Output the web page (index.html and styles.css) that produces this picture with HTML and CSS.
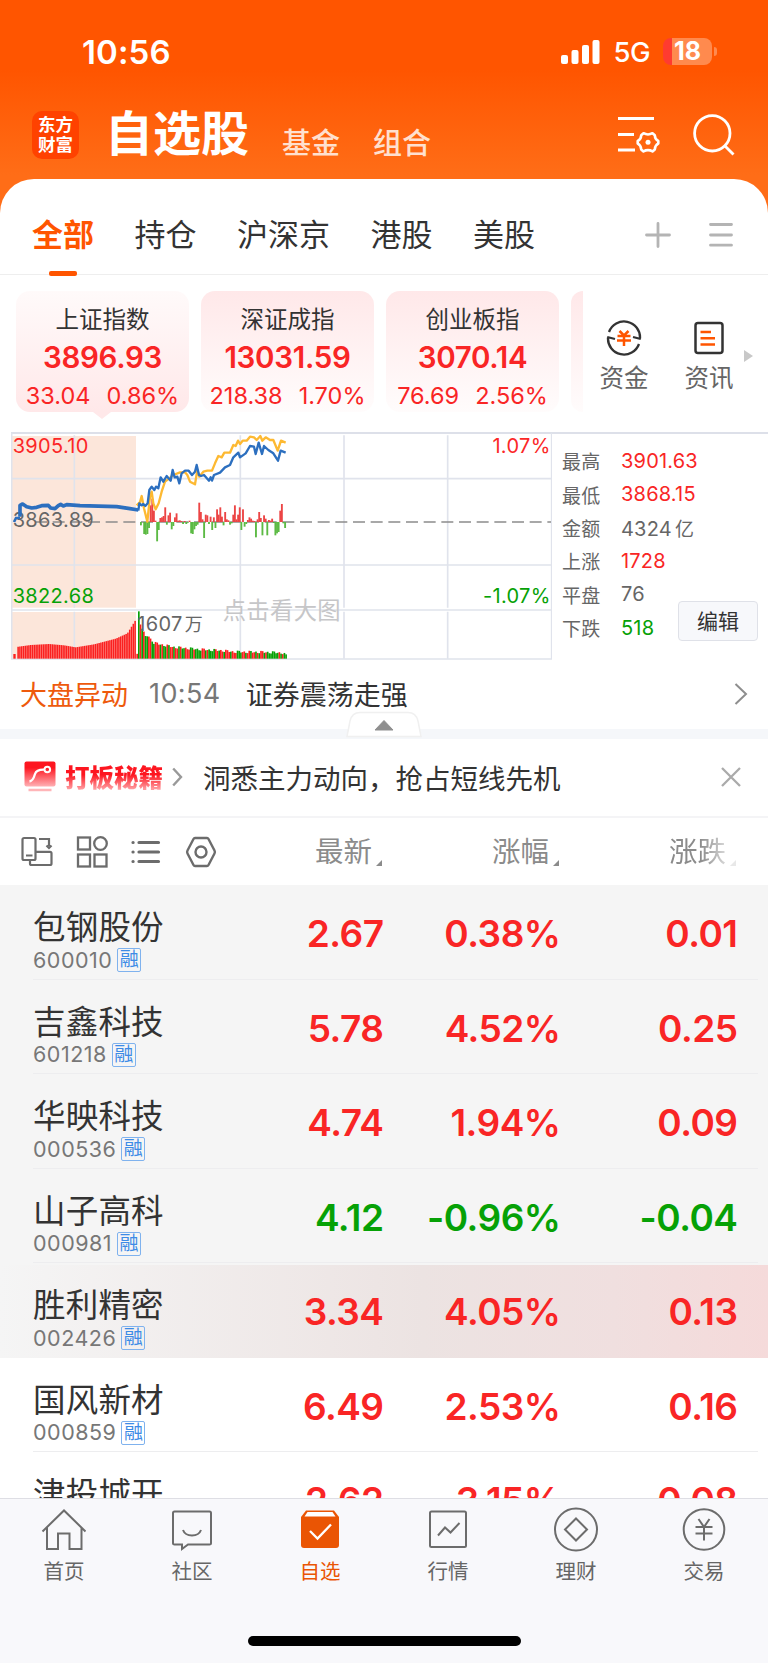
FILE: index.html
```html
<!DOCTYPE html>
<html lang="zh-CN">
<head>
    <meta charset="UTF-8">
    <meta name="viewport" content="width=device-width, initial-scale=1.0">
    <title>自选股</title>
    <link rel="stylesheet" href="styles.css">
</head>
<body>
<div class="app">

    <div class="header">
        <div class="status-bar">
            <span class="time">10:56</span>
            <div class="status-right">
                <svg class="signal" width="39" height="24" viewBox="0 0 39 24" fill="#fff">
                    <rect x="0" y="15" width="7" height="9" rx="2"/>
                    <rect x="10.5" y="10" width="7" height="14" rx="2"/>
                    <rect x="21" y="5" width="7" height="19" rx="2"/>
                    <rect x="31.5" y="0" width="7" height="24" rx="2"/>
                </svg>
                <span class="network">5G</span>
                <div class="battery"><span>18</span></div>
                <i class="battery-tip"></i>
            </div>
        </div>
        <div class="nav">
            <div class="logo"><span>东方</span><span>财富</span></div>
            <div class="nav-tabs">
                <h1>自选股</h1>
                <span>基金</span>
                <span>组合</span>
            </div>
            <div class="nav-icons">
                <svg width="43" height="40" viewBox="0 0 43 40" fill="none" stroke="#fff" stroke-width="3">
                    <path d="M1 3.500H37M1 19.500H17M1 35H18"/>
                    <path stroke-width="2.600" stroke-linejoin="round" d="M26.500 18.200Q31 20.700 35.500 18.200L37.800 20.200Q38 24.500 41.300 26L41.300 28.600Q38 30.100 37.800 34.400L35.500 36.400Q31 33.900 26.500 36.400L24.200 34.400Q24 30.100 20.700 28.600L20.700 26Q24 24.500 24.200 20.200Z"/>
                    <circle cx="31" cy="27.300" r="2.500" fill="#fff" stroke="none"/>
                </svg>
                <svg width="42" height="42" viewBox="0 0 42 42" fill="none" stroke="#fff" stroke-width="2.800">
                    <circle cx="19.300" cy="19.300" r="17.700"/>
                    <path d="M31.500 31.500L40.500 40.500"/>
                </svg>
            </div>
        </div>
    </div>

    <div class="sheet">
        <div class="group-tabs">
            <div class="group-list">
                <span class="active">全部</span>
                <span>持仓</span>
                <span>沪深京</span>
                <span>港股</span>
                <span>美股</span>
            </div>
            <svg width="26" height="26" viewBox="0 0 26 26" stroke="#b4b4b4" stroke-width="2.800" stroke-linecap="round">
                <path d="M1.500 13H24.500M13 1.500V24.500"/>
            </svg>
            <svg class="menu-icon" width="24" height="26" viewBox="0 0 24 26" stroke="#b4b4b4" stroke-width="2.800" stroke-linecap="round">
                <path d="M1.500 2.500H22.500M1.500 13H22.500M1.500 23.200H22.500"/>
            </svg>
        </div>

        <div class="indices">
            <div class="card selected">
                <h3>上证指数</h3>
                <strong>3896.93</strong>
                <p><span>33.04</span><span>0.86%</span></p>
            </div>
            <div class="card">
                <h3>深证成指</h3>
                <strong>13031.59</strong>
                <p><span>218.38</span><span>1.70%</span></p>
            </div>
            <div class="card">
                <h3>创业板指</h3>
                <strong>3070.14</strong>
                <p><span>76.69</span><span>2.56%</span></p>
            </div>
            <div class="card-peek"></div>
            <div class="shortcut">
                <svg width="36" height="36" viewBox="0 0 36 36" fill="none" stroke="#333" stroke-width="2.300">
                    <path d="M3 12A16 16 0 0 1 34 18.500M34.800 19L27 17M33 24A16 16 0 0 1 2 17.500M1.200 17L9 19"/>
                    <path stroke="#f50" stroke-width="2.500" d="M13.500 11L18 15.500L22.500 11M11.500 16H24.500M11 20.500H25M18 15.500V26"/>
                </svg>
                <span>资金</span>
            </div>
            <div class="shortcut">
                <svg width="30" height="36" viewBox="0 0 30 36" fill="none" stroke="#333" stroke-width="2.500">
                    <rect x="1.500" y="3" width="27" height="30" rx="2.500"/>
                    <path stroke="#f50" d="M6.500 12H17M6.500 18.300H21M6.500 24.500H21"/>
                </svg>
                <span>资讯</span>
            </div>
            <i class="more-arrow"></i>
        </div>

        <div class="market">
            <!-- chart units are 1/3 px -->
            <svg class="chart" width="541" height="228" viewBox="33 36 1623 684">
                <rect x="36" y="48" width="372" height="515" fill="#fce6da"/>
                <rect x="36" y="576" width="372" height="140" fill="#fce6da"/>
                <g stroke="#e0e3ec" stroke-width="5">
                    <path d="M36 176H1653M36 435H1653M36 570H1653" />
                    <path d="M223 46V563M223 575V716M721 46V563M721 575V716M1032 46V563M1032 575V716M1343 46V563M1343 575V716"/>
                    <path fill="none" d="M35 38V717H1655V38"/>
                </g>
                <path d="M105 306H1653" stroke="#8c8c8c" stroke-width="5" stroke-dasharray="36 17" />
                <g id="diff"></g>
                <g id="volume"></g>
                <text x="38" y="100" fill="#fb2727">3905.10</text>
                <text x="38" y="322" fill="#666">3863.89</text>
                <text x="38" y="549" fill="#06a106">3822.68</text>
                <text x="1652" y="100" fill="#fb2727" text-anchor="end">1.07%</text>
                <text x="1652" y="549" fill="#06a106" text-anchor="end">-1.07%</text>
                <text x="412" y="634" fill="#666">1607</text>
                <text x="554" y="632" fill="#666" class="unit">万</text>
                <text x="668" y="598" fill="#c6c6c8" class="watermark">点击看大图</text>
                <polyline fill="none" stroke="#fdb932" stroke-width="7" stroke-linejoin="round" points="410,256 420,246 425,228 432,265 442,305 450,230 455,215 460,250 467,268 476,250 485,215 495,185 508,175 520,165 540,157 555,157 562,165 570,185 585,193 592,150 598,170 610,155 622,152 636,152 645,130 655,108 665,112 673,98 690,98 700,75 707,78 714,62 720,72 728,62 740,62 750,50 762,52 770,60 781,48 787,62 797,52 810,60 820,60 833,92 843,62 857,68"/>
                <polyline fill="none" stroke="#2c6fbf" stroke-width="7" stroke-linejoin="round" points="415,272 418,250 425,256 430,252 436,258 443,250 448,210 455,200 463,210 468,200 475,205 482,172 490,185 500,168 512,182 518,150 524,172 532,170 538,190 545,160 555,152 566,152 576,165 585,155 590,135 597,165 603,168 612,165 627,182 632,172 636,182 642,165 660,158 675,142 690,135 700,112 715,98 720,112 737,100 750,78 762,80 767,102 776,68 786,102 792,78 805,90 820,100 834,122 842,92 857,98"/>
                <polyline fill="none" stroke="#2c6fbf" stroke-width="11" stroke-linejoin="round" points="60,290 60,256 68,252 80,260 95,264 110,262 125,257 145,256 152,264 165,266 175,257 182,253 190,258 200,254 240,257 350,260 385,265 415,270"/>
                <path d="M42 306L48 294H60" fill="none" stroke="#2c6fbf" stroke-width="8"/>
            </svg>
            <div class="market-info">
                <dl>
                    <dt>最高</dt><dd class="up">3901.63</dd>
                    <dt>最低</dt><dd class="up">3868.15</dd>
                    <dt>金额</dt><dd>4324<span class="unit">亿</span></dd>
                    <dt>上涨</dt><dd class="up">1728</dd>
                    <dt>平盘</dt><dd>76</dd>
                    <dt>下跌</dt><dd class="down">518</dd>
                </dl>
                <button class="edit">编辑</button>
            </div>
        </div>

        <div class="news">
            <span class="news-tag">大盘异动</span>
            <span class="news-time">10:54</span>
            <span class="news-text">证券震荡走强</span>
            <svg width="14" height="24" viewBox="0 0 14 24" fill="none" stroke="#8e8e8e" stroke-width="2"><path d="M1.500 2L12 12L1.500 22"/></svg>
        </div>
        <div class="divider">
            <div class="handle">
                <svg width="76" height="27" viewBox="0 0 76 27">
                    <path d="M1 25.500L4 10Q6 1.500 14 1.500H62Q70 1.500 72 10L75 25.500Z" fill="#fff" stroke="#f0f0f0" stroke-width="1.500"/>
                    <path d="M29 19L38 9.500L47 19Z" fill="#8f8f8f" stroke="#8f8f8f" stroke-linejoin="round"/>
                </svg>
            </div>
        </div>

        <div class="promo">
            <svg width="32" height="32" viewBox="0 0 32 32" fill="none">
                <defs>
                    <linearGradient id="promoRed" x1="0" y1="0" x2="0" y2="1">
                        <stop offset="0.25" stop-color="#fd1620"/>
                        <stop offset="1" stop-color="#ffb0b4"/>
                    </linearGradient>
                </defs>
                <rect x="0.500" y="0.500" width="31" height="25" rx="2" fill="url(#promoRed)"/>
                <path d="M5.500 20.500Q9 20 11 13Q12.500 8.500 20 8.700" stroke="#fff" stroke-width="2.300"/>
                <circle cx="23.300" cy="8.500" r="2.800" stroke="#fff" stroke-width="2"/>
                <path d="M4.500 29H27.500" stroke="#ffb5b8" stroke-width="2.500"/>
            </svg>
            <span class="promo-title">打板秘籍</span>
            <svg class="promo-arrow" width="11" height="20" viewBox="0 0 11 20" fill="none" stroke="#999" stroke-width="2.400"><path d="M1.200 1.500L9 10L1.200 18.500"/></svg>
            <span class="promo-text">洞悉主力动向，抢占短线先机</span>
            <svg width="20" height="20" viewBox="0 0 20 20" stroke="#aaa" stroke-width="2.300"><path d="M1 1L19 19M19 1L1 19"/></svg>
        </div>

        <div class="toolbar">
            <div class="tools">
                <svg width="32" height="32" viewBox="0 0 32 32" fill="none" stroke="#6c6c6c" stroke-width="2.200">
                    <rect x="1.500" y="2" width="13" height="22" rx="1.500"/>
                    <path d="M5 19.500H11.500M18 3H28V10M25.500 9.500L28 12L30.500 9.500M9 24V27.500Q9 29 10.500 29H29Q30.500 29 30.500 27.500V17.300Q30.500 15.800 29 15.800H14.500"/>
                </svg>
                <svg width="32" height="32" viewBox="0 0 32 32" fill="none" stroke="#6c6c6c" stroke-width="2.300">
                    <rect x="2" y="1.500" width="12" height="12"/>
                    <circle cx="24.500" cy="7.500" r="6.300"/>
                    <rect x="2" y="18.500" width="12" height="12"/>
                    <rect x="18.500" y="18.500" width="12" height="12"/>
                </svg>
                <svg width="32" height="32" viewBox="0 0 32 32" fill="none" stroke="#6c6c6c" stroke-width="3.200" stroke-linecap="round">
                    <path d="M9 6.500H28.500M9 16H28.500M9 25.500H28.500M3 6.500h.1M3 16h.1M3 25.500h.1"/>
                </svg>
                <svg width="32" height="32" viewBox="0 0 32 32" fill="none" stroke="#6c6c6c" stroke-width="2.400" stroke-linejoin="round">
                    <path d="M10 2H22Q23 2 23.500 3L29.500 14.500Q30.300 16 29.500 17.500L23.500 29Q23 30 22 30H10Q9 30 8.500 29L2.500 17.500Q1.700 16 2.500 14.500L8.500 3Q9 2 10 2Z"/>
                    <circle cx="16" cy="16" r="5.500"/>
                </svg>
            </div>
            <div class="sort">最新<i></i></div>
            <div class="sort">涨幅<i></i></div>
            <div class="sort fade">涨跌<i></i></div>
        </div>

        <div class="stocks">
            <div class="stock pinned">
                <div class="name"><b>包钢股份</b><small>600010<em>融</em></small></div>
                <span class="up">2.67</span><span class="up">0.38%</span><span class="up">0.01</span>
            </div>
            <div class="stock pinned">
                <div class="name"><b>吉鑫科技</b><small>601218<em>融</em></small></div>
                <span class="up">5.78</span><span class="up">4.52%</span><span class="up">0.25</span>
            </div>
            <div class="stock pinned">
                <div class="name"><b>华映科技</b><small>000536<em>融</em></small></div>
                <span class="up">4.74</span><span class="up">1.94%</span><span class="up">0.09</span>
            </div>
            <div class="stock pinned">
                <div class="name"><b>山子高科</b><small>000981<em>融</em></small></div>
                <span class="down">4.12</span><span class="down">-0.96%</span><span class="down">-0.04</span>
            </div>
            <div class="stock pinned flash">
                <div class="name"><b>胜利精密</b><small>002426<em>融</em></small></div>
                <span class="up">3.34</span><span class="up">4.05%</span><span class="up">0.13</span>
            </div>
            <div class="stock">
                <div class="name"><b>国风新材</b><small>000859<em>融</em></small></div>
                <span class="up">6.49</span><span class="up">2.53%</span><span class="up">0.16</span>
            </div>
            <div class="stock">
                <div class="name"><b>津投城开</b></div>
                <span class="up">2.62</span><span class="up">3.15%</span><span class="up">0.08</span>
            </div>
        </div>
    </div>

    <div class="tabbar">
        <div class="tabs">
            <div class="tab">
                <svg width="46" height="46" viewBox="0 0 46 46">
                    <path d="M1.500 24.500L23 3.500L44.500 24.500M6 20.500V42H17V26.500H28.500V42H40.500V20.500"/>
                </svg>
                <span>首页</span>
            </div>
            <div class="tab">
                <svg width="46" height="46" viewBox="0 0 46 46">
                    <path d="M5.500 4.500H40.500Q42 4.500 42 6V36.500Q42 37.500 40.500 37.500H19L13 42V37.500H5.500Q4 37.500 4 36.500V6Q4 4.500 5.500 4.500Z"/>
                    <path d="M14 23Q16 28.500 23 28.500Q30 28.500 32 23"/>
                </svg>
                <span>社区</span>
            </div>
            <div class="tab active">
                <svg width="46" height="46" viewBox="0 0 46 46">
                    <path d="M9 3.500H37L42 10V38Q42 41 39 41H7Q4 41 4 38V10Z" fill="#ea5504" stroke="none"/>
                    <path d="M10.500 5H35.500L38.500 9.500H7.500Z" fill="#fff" stroke="none"/>
                    <path d="M13 24L20.500 31.500L34 17.500" stroke="#fff" stroke-width="2.300"/>
                </svg>
                <span>自选</span>
            </div>
            <div class="tab">
                <svg width="46" height="46" viewBox="0 0 46 46">
                    <rect x="5" y="4.500" width="36" height="35.500" rx="1.500"/>
                    <path d="M13 28.500L20 20.500L25.500 25.500L34.500 16"/>
                </svg>
                <span>行情</span>
            </div>
            <div class="tab">
                <svg width="46" height="46" viewBox="0 0 46 46">
                    <circle cx="23" cy="22.500" r="21"/>
                    <path d="M23 11.500L34 22.500L23 33.500L12 22.500Z"/>
                </svg>
                <span>理财</span>
            </div>
            <div class="tab">
                <svg width="46" height="46" viewBox="0 0 46 46">
                    <circle cx="23" cy="22.500" r="20.300"/>
                    <path d="M17.500 12L23 20L28.500 12M14.500 20H31.500M14.500 26.500H31.500M23 20V33.500"/>
                </svg>
                <span>交易</span>
            </div>
        </div>
        <div class="home-indicator"></div>
    </div>

</div>
<script src="chart.js"></script>
</body>
</html>
```

FILE: styles.css
```css
body {
    margin: 0;
    background: #fff;
    font-family: Inter, "Noto Sans CJK SC", sans-serif;
    color: #333;
}

h1, h3, p, dl, dd {
    margin: 0;
}

svg {
    display: block;
    flex-shrink: 0;
}

.app {
    width: 768px;
    height: 1663px;
    display: flex;
    flex-direction: column;
    overflow: hidden;
    white-space: nowrap;
}

.up {
    color: #f92525;
}

.down {
    color: #06a106;
}

/* header */
.header {
    height: 219px;
    margin-bottom: -40px;
    background: linear-gradient(#ff5500 0, #ff5500 70px, #ff6d17 175px);
    color: #fff;
    flex-shrink: 0;
}

.status-bar {
    display: flex;
    justify-content: space-between;
    align-items: center;
    height: 103px;
    padding: 0 51px 0 82px;
}

.time {
    font-size: 33px;
    font-weight: 600;
    letter-spacing: 0.1px;
}

.status-right {
    display: flex;
    align-items: center;
}

.network {
    font-size: 27.5px;
    font-weight: 500;
    margin: 0 13px 0 13px;
    letter-spacing: -0.5px;
}

.battery {
    width: 49px;
    height: 27px;
    line-height: 27px;
    border-radius: 8px;
    background: linear-gradient(90deg, #ff3b30 9px, #ff8a4e 9px);
    font-size: 25px;
    font-weight: 700;
    text-align: center;
}

.battery-tip {
    width: 3px;
    height: 9px;
    margin-left: 2px;
    border-radius: 0 4px 4px 0;
    background: #ff8a4e;
}

.nav {
    display: flex;
    align-items: center;
    height: 63px;
    padding: 0 33px 0 32px;
}

.logo {
    width: 47px;
    height: 48px;
    border-radius: 10px;
    background: #ff4200;
    display: flex;
    flex-direction: column;
    align-items: center;
    justify-content: center;
    font-size: 17.5px;
    line-height: 20px;
    font-weight: 700;
}

.nav-tabs {
    display: flex;
    align-items: baseline;
    margin-left: 26px;
    flex: 1;
    font-size: 29px;
    line-height: 64px;
}

.nav-tabs h1 {
    font-size: 48px;
    font-weight: 700;
    padding-top: 6px;
}

.nav-tabs span {
    position: relative;
    top: 3px;
    margin-left: 33px;
    color: #ffe0cf;
    font-weight: 500;
}

.nav-icons {
    display: flex;
    gap: 33px;
    align-items: center;
}

/* white sheet */
.sheet {
    flex: 1;
    min-height: 0;
    display: flex;
    flex-direction: column;
    background: #fff;
    border-radius: 34px 34px 0 0;
    overflow: hidden;
}

.sheet > div {
    flex-shrink: 0;
}

.group-tabs {
    display: flex;
    align-items: center;
    height: 95px;
    padding: 0 35px 0 32px;
    border-bottom: 1px solid #eee;
    position: relative;
}

.group-tabs > svg {
    margin-top: 17px;
}

.group-tabs .menu-icon {
    margin-left: 38px;
}

.group-list {
    display: flex;
    gap: 40.5px;
    flex: 1;
    padding-top: 17px;
    font-size: 31px;
    line-height: 80px;
}

.group-list .active {
    color: #ff5500;
    font-weight: 700;
    position: relative;
}

.group-list .active::after {
    content: "";
    position: absolute;
    left: 17px;
    bottom: -1px;
    width: 28px;
    height: 5px;
    border-radius: 2px;
    background: #ff5500;
}

.indices {
    display: flex;
    height: 141px;
    padding: 16px 0 0 16px;
    box-sizing: border-box;
}

.card {
    width: 173px;
    height: 121px;
    margin-right: 12px;
    border-radius: 14px;
    background: linear-gradient(#ffe8e9, #fffcfc);
    text-align: center;
    color: #f92525;
}

.card.selected {
    background: linear-gradient(#fffafa, #ffe8e9);
    position: relative;
}

.card.selected::after {
    content: "";
    position: absolute;
    left: 77px;
    top: 121px;
    border: 9px solid transparent;
    border-top: 7px solid #ffe8e9;
    border-bottom: 0;
}

.card h3 {
    font-size: 23.5px;
    font-weight: 400;
    line-height: 30px;
    padding-top: 14px;
    color: #333;
}

.card strong {
    display: block;
    font-size: 29.5px;
    font-weight: 600;
    line-height: 36px;
    margin-top: 4px;
    letter-spacing: -0.3px;
}

.card p {
    display: flex;
    justify-content: center;
    gap: 16px;
    font-size: 23.5px;
    line-height: 41px;
}

.card-peek {
    width: 12px;
    height: 121px;
    border-radius: 14px 0 0 14px;
    background: linear-gradient(#ffe8e9, #fffcfc);
}

.shortcut {
    display: flex;
    flex-direction: column;
    align-items: center;
    width: 50px;
    padding-top: 29px;
    margin-left: 16px;
    font-size: 24.5px;
    line-height: 45px;
    color: #666;
}

.shortcut + .shortcut {
    margin-left: 35px;
}

.more-arrow {
    margin: 59px 0 0 10px;
    width: 0;
    height: 0;
    border: 6.5px solid transparent;
    border-left: 9px solid #c8c8c8;
    border-right: 0;
}

/* market chart */
.market {
    display: flex;
    height: 228px;
    margin: 16px 0 0 11px;
    background: linear-gradient(#dde0e9, #dde0e9) 0 0 / 100% 2px no-repeat;
}

.chart text {
    font-size: 60px;
    letter-spacing: 1px;
}

.chart .unit {
    font-size: 54px;
}

.chart .watermark {
    font-size: 70px;
}

.market-info {
    display: flex;
    flex: 1;
    padding: 12px 10px 0 10px;
    color: #666;
}

.market-info dl {
    display: grid;
    grid-template-columns: 59px 77px;
    grid-auto-rows: 33.4px;
    align-items: center;
    flex: 1;
    font-size: 20px;
    letter-spacing: 0.2px;
}

.market-info dt,
.market-info .unit {
    font-size: 19px;
}

.market-info .unit {
    margin-left: 3px;
}

.edit {
    width: 80px;
    height: 40px;
    margin: 157px 0 0 -57px;
    padding: 0 0 3px;
    border: 1px solid #dfe1e8;
    border-radius: 4px;
    background: #f7f8fb;
    font-family: inherit;
    font-size: 21px;
    color: #333;
    flex-shrink: 0;
}

.news {
    display: flex;
    align-items: center;
    height: 69px;
    padding: 0 20px 2px;
    font-size: 27px;
    box-sizing: border-box;
}

.news-tag {
    color: #ee5a0c;
}

.news-time {
    color: #777;
    margin: 0 25px 0 21px;
    letter-spacing: 0.4px;
}

.news-text {
    flex: 1;
}

.divider {
    height: 10px;
    background: #f5f7fa;
    position: relative;
}

.handle {
    position: absolute;
    left: 346px;
    top: -18px;
}

/* promo */
.promo {
    display: flex;
    align-items: center;
    height: 79px;
    padding: 0 27px 2px 24px;
    border-bottom: 2px solid #f4f4f6;
    box-sizing: border-box;
}

.promo-title {
    margin-left: 9px;
    font-size: 24.5px;
    font-weight: 900;
    background: linear-gradient(#fd1620 45%, #ff9a9e 85%);
    -webkit-background-clip: text;
    background-clip: text;
    color: transparent;
}

.promo-arrow {
    margin: 0 20px 0 9px;
}

.promo-text {
    flex: 1;
    font-size: 27.5px;
}

/* column heads */
.toolbar {
    display: flex;
    align-items: center;
    height: 67px;
    padding-left: 21px;
}

.tools {
    display: flex;
    gap: 22.5px;
    width: 294px;
}

.sort {
    width: 69px;
    margin-right: 108px;
    display: flex;
    align-items: flex-end;
    font-size: 28.5px;
    line-height: 40px;
    color: #8b8b8b;
    padding-top: 1px;
}

.sort i {
    margin: 0 0 6px 4px;
    border: 3.5px solid #8b8b8b;
    border-top-color: transparent;
    border-left-color: transparent;
}

.sort.fade {
    margin-right: 0;
    -webkit-mask: linear-gradient(90deg, #000 45%, rgba(0, 0, 0, 0.2) 90%);
    mask: linear-gradient(90deg, #000 45%, rgba(0, 0, 0, 0.2) 90%);
}

/* stock list */
.stock {
    display: grid;
    grid-template-columns: 180px 170.5px 177px 177px;
    height: 94.5px;
    padding-left: 33px;
    box-sizing: border-box;
    background: linear-gradient(#ededef, #ededef) 33px 100% / 725px 1px no-repeat;
}

.stock.pinned {
    background-color: #f5f5f5;
}

.stock.flash {
    background: linear-gradient(#f5f5f5, #f5f5f5) 0 0 / 100% 2px no-repeat,
        linear-gradient(90deg, #f5f5f5, #ece3e2 55%, #f0dfdf 80%, #f5dada);
}

.stock b {
    display: block;
    font-size: 32.5px;
    font-weight: 400;
    line-height: 40px;
    padding-top: 23px;
    letter-spacing: 0.2px;
}

.stock small {
    display: flex;
    align-items: center;
    font-size: 21.5px;
    line-height: 23px;
    letter-spacing: 0.5px;
    color: #777;
}

.stock em {
    width: 22px;
    height: 22px;
    margin-left: 5px;
    border: 1px solid #7fb2ee;
    border-radius: 2px;
    font-size: 19px;
    line-height: 21px;
    letter-spacing: 0;
    font-style: normal;
    text-align: center;
    color: #3d8be6;
}

.stock > span {
    font-size: 37px;
    font-weight: 600;
    line-height: 97px;
    text-align: right;
    letter-spacing: -0.5px;
}

/* bottom bar */
.tabbar {
    height: 165px;
    box-sizing: border-box;
    border-top: 1px solid #dedee4;
    background: #f8f8fb;
    flex-shrink: 0;
}

.tabs {
    display: flex;
}

.tab {
    flex: 1;
    display: flex;
    flex-direction: column;
    align-items: center;
    padding-top: 8px;
    height: 130px;
    box-sizing: border-box;
    font-size: 20.5px;
    line-height: 38px;
    color: #666;
}

.tab svg {
    fill: none;
    stroke: #6c6c6c;
    stroke-width: 2;
}

.tab.active {
    color: #ea5504;
}

.home-indicator {
    width: 273px;
    height: 10px;
    margin: 7px auto 0;
    border-radius: 5px;
    background: #000;
}
```

FILE: chart.js
```js
const RED = "#fb2020";
const GREEN = "#06a106";

function bar(parent, x, y, w, h, color) {
    const r = document.createElementNS("http://www.w3.org/2000/svg", "rect");
    r.setAttribute("x", x);
    r.setAttribute("y", y);
    r.setAttribute("width", w);
    r.setAttribute("height", h);
    r.setAttribute("fill", color);
    document.getElementById(parent).appendChild(r);
}

// linear interpolation between [x, height] points
function level(points, x) {
    for (let i = 1; i < points.length; i++) {
        const [x0, h0] = points[i - 1];
        const [x1, h1] = points[i];
        if (x <= x1) return h0 + (h1 - h0) * (x - x0) / (x1 - x0);
    }
    return points[points.length - 1][1];
}

// bars above / below the previous close, from x = 420
const diff = [
    -10, 0, -36, -38, -36, -18, 50, 70, 34, 4, -58, -24, 12, 14, 18, 44, -8, 20, 28, -22, -12,
    14, 26, 4, 5, 3, -6, 3, -6, -2, 4, -34, -36, -22, -12, -8, 58, 30, 8, -48, 22, 20, -6, 16,
    -24, 14, -18, 38, 22, 44, 16, -10, 30, 8, 5, -8, -4, 22, 50, 8, 22, 44, -24, 38, -14, -6, 6,
    14, 10, 4, 3, -46, 8, 30, 12, -40, 20, 10, -40, 6, 4, 10, -3, -40, -34, -30, 34, 54, -4, -18
];
diff.forEach((v, i) => {
    const x = 420 + i * 4.86;
    bar("diff", x, v > 0 ? 306 - v : 306, 5.6, Math.abs(v), v > 0 ? "#ec4545" : "#5cba44");
});

const auction = [[54, 36], [90, 41], [145, 44], [190, 40], [225, 34], [280, 43], [345, 60], [380, 76], [404, 115]];
bar("volume", 40, 702, 7, 14, RED);
for (let x = 52; x < 406; x += 5.4) {
    const h = level(auction, x);
    bar("volume", x, 716 - h, 4.7, h, RED);
}

const trading = [[410, 40], [414, 142], [420, 95], [428, 85], [433, 68], [446, 66], [456, 48], [480, 42], [520, 34], [600, 27], [660, 24], [700, 20], [790, 19], [845, 17], [862, 5]];
const colors = "rgrgrggrrggrrrgrggrgrrgrrgrggrrrggrggggrrgrggggrrgrrgrrrgrrrgggrrgrrgrrgrgrrgrgggggggrgrgg";
const jitter = [0, 5, -4, 3, -2, 6, -3];
for (let i = 0; i < 90; i++) {
    const x = 409 + i * 5.02;
    const h = Math.max(5, (i === 1 ? 142 : level(trading, x)) + (i > 9 ? jitter[i * 3 % 7] * 0.7 : 0));
    bar("volume", x, 716 - h, 5, h, colors[i] === "r" ? RED : GREEN);
}
```
